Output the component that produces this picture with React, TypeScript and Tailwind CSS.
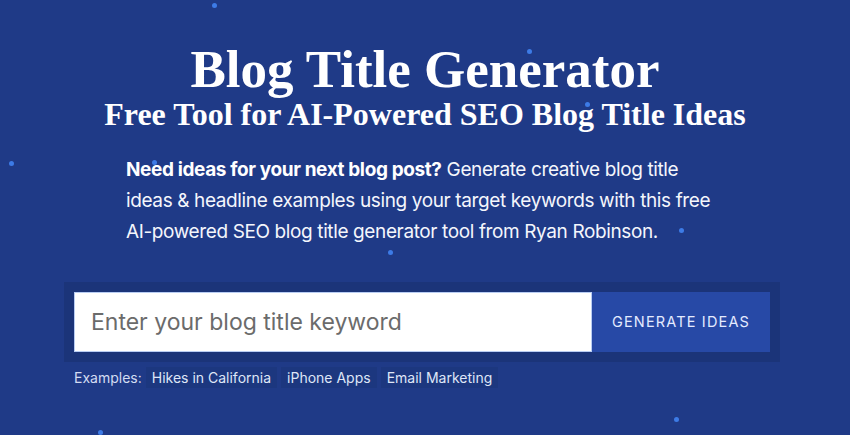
import { useState } from 'react'

const dots = [
  { x: 214, y: 5 },
  { x: 529, y: 51 },
  { x: 587, y: 104 },
  { x: 11, y: 163 },
  { x: 154, y: 162 },
  { x: 681, y: 230 },
  { x: 390, y: 252 },
  { x: 183, y: 374 },
  { x: 467, y: 375 },
  { x: 676, y: 419 },
  { x: 100, y: 432 },
]

const examples = ['Hikes in California', 'iPhone Apps', 'Email Marketing']

export default function App() {
  const [keyword, setKeyword] = useState('')

  return (
    <div className="relative w-[850px] h-[435px] overflow-hidden bg-[#1f3a87] font-['Inter','Noto_Sans',sans-serif]">
      {/* background particles */}
      {dots.map((d, i) => (
        <span
          key={i}
          className="absolute w-[5px] h-[5px] rounded-full bg-[#3d7be6]"
          style={{ left: d.x - 2, top: d.y - 2 }}
        />
      ))}

      <div className="relative flex flex-col items-center pt-[41px]">
        <h1 className="font-['Liberation_Serif',serif] font-bold text-white text-[53px] leading-[56px]">
          Blog Title Generator
        </h1>
        <h2 className="font-['Liberation_Serif',serif] font-bold text-white text-[32px] leading-[34px]">
          Free Tool for AI-Powered SEO Blog Title Ideas
        </h2>

        <p className="mt-[23px] w-[598px] text-[19px] leading-[31px] tracking-[-0.02em] text-[#f4f6fc]">
          <strong className="font-bold text-white">Need ideas for your next blog post?</strong> Generate creative blog title
          ideas &amp; headline examples using your target keywords with this free AI-powered SEO blog title
          generator tool from Ryan Robinson.
        </p>

        <div className="self-start ml-[64px] mt-[35px] w-[716px] p-[10px] bg-[#1b3479]">
          <div className="flex h-[60px]">
            <input
              value={keyword}
              onChange={e => setKeyword(e.target.value)}
              placeholder="Enter your blog title keyword"
              className="flex-1 min-w-0 bg-white border border-[#b9cdf3] px-4 text-[23px] text-gray-800 placeholder:text-[#6b6b6b] outline-none"
            />
            <button className="w-[178px] bg-[#2749a6] text-[#e4ebff] text-[14.5px] tracking-[0.08em] uppercase">
              Generate Ideas
            </button>
          </div>
        </div>

        <div className="self-start ml-[74px] mt-[5px] flex items-center gap-[4px] text-[14px] text-[#d3dcf2]">
          <span>Examples:</span>
          {examples.map(ex => (
            <button
              key={ex}
              onClick={() => setKeyword(ex)}
              className="h-[21px] px-[6px] bg-[#1c377f] text-[#dfe6f7] leading-[21px]"
            >
              {ex}
            </button>
          ))}
        </div>
      </div>
    </div>
  )
}
